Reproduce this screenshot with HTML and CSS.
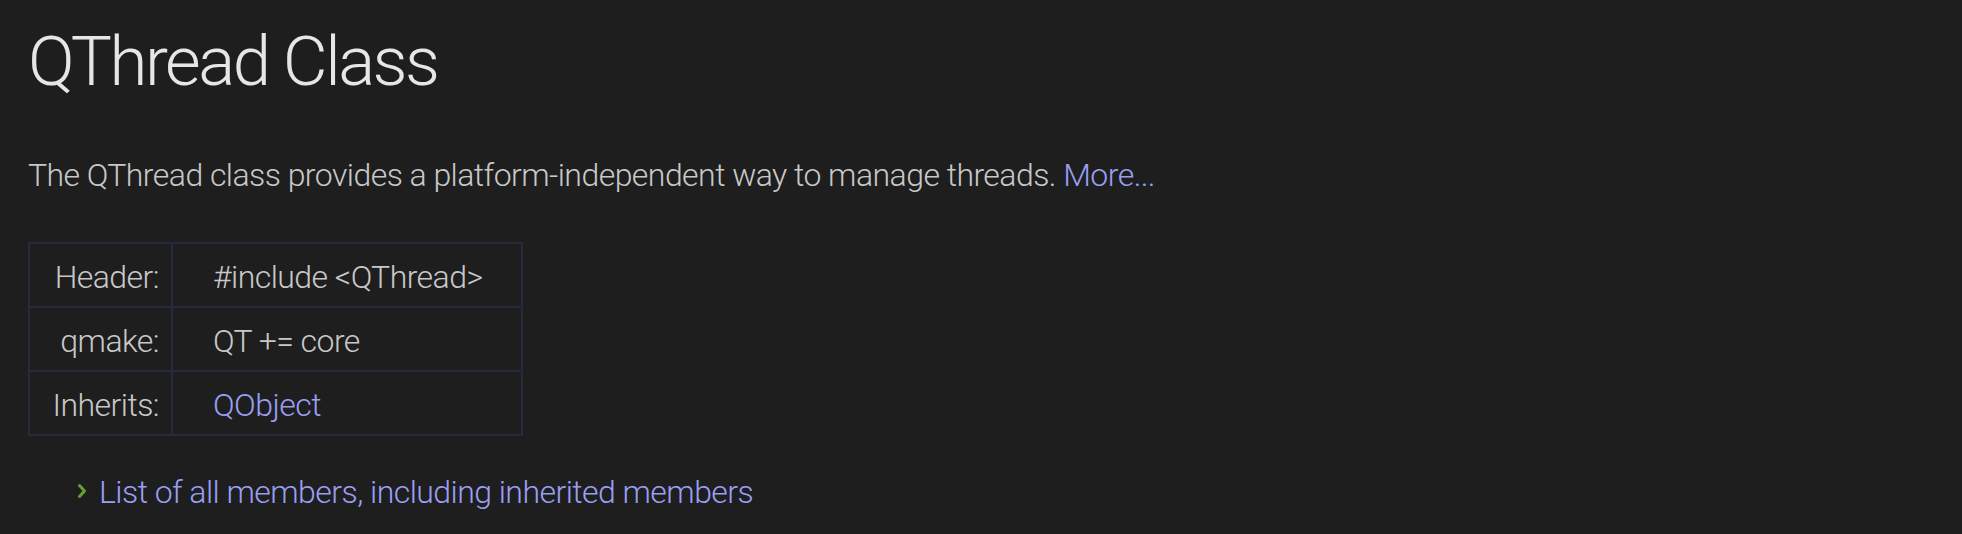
FILE: index.html
```html
<!DOCTYPE html>
<html lang="en">
<head>
<meta charset="utf-8">
<title>QThread Class</title>
<link rel="stylesheet" href="styles.css">
</head>
<body>
<main class="page">
  <h1 class="title">QThread Class</h1>
  <p class="brief">The QThread class provides a platform-independent way to manage threads. <a class="link" href="#details">More...</a></p>
  <table class="info">
    <tr>
      <td class="label">Header:</td>
      <td class="value">#include &lt;QThread&gt;</td>
    </tr>
    <tr>
      <td class="label">qmake:</td>
      <td class="value">QT += core</td>
    </tr>
    <tr>
      <td class="label">Inherits:</td>
      <td class="value"><a class="link" href="#qobject">QObject</a></td>
    </tr>
  </table>
  <ul class="members">
    <li class="member-item">
      <svg class="chevron" width="10" height="16" viewBox="0 0 10 16" aria-hidden="true"><path d="M2.5 2.5 L7.5 8 L2.5 13.5" fill="none" stroke="#63a22e" stroke-width="3" stroke-linecap="round" stroke-linejoin="round"/></svg>
      <a class="link" href="#members">List of all members, including inherited members</a>
    </li>
  </ul>
</main>
</body>
</html>
```
FILE: styles.css
```css
html, body {
  margin: 0;
  padding: 0;
  background: #1e1e1e;
}

body {
  font-family: "Roboto", "Liberation Sans", sans-serif;
  font-weight: 300;
  color: #c9c9c9;
}

.page {
  padding: 19px 28px 0 28px;
}

.title {
  margin: 0;
  font-size: 69px;
  line-height: 85px;
  font-weight: 300;
  letter-spacing: -2.5px;
  color: #e6e6e6;
}

.brief {
  margin: 47px 0 0 0;
  font-size: 32px;
  line-height: 48px;
  letter-spacing: -0.55px;
  color: #c8c8c8;
}

.link {
  color: #9a9ef2;
  text-decoration: none;
}

.info {
  margin-top: 43px;
  border-collapse: collapse;
  border: 2px solid #252a3f;
  width: 495px;
  font-size: 32px;
  line-height: 48px;
  letter-spacing: -0.55px;
}

.info td {
  border: 2px solid #252a3f;
  padding: 9px 0 5px 0;
  color: #c8c8c8;
}

.info .label {
  width: 129px;
  text-align: right;
  padding-right: 12px;
}

.info .value {
  padding-left: 40px;
}

.members {
  list-style: none;
  margin: 32px 0 0 0;
  padding: 0 0 0 49px;
  font-size: 32px;
  line-height: 48px;
  letter-spacing: -0.55px;
}

.member-item {
  display: flex;
  align-items: center;
  gap: 12px;
}

.chevron {
  flex: none;
  margin-top: -2px;
}
```
